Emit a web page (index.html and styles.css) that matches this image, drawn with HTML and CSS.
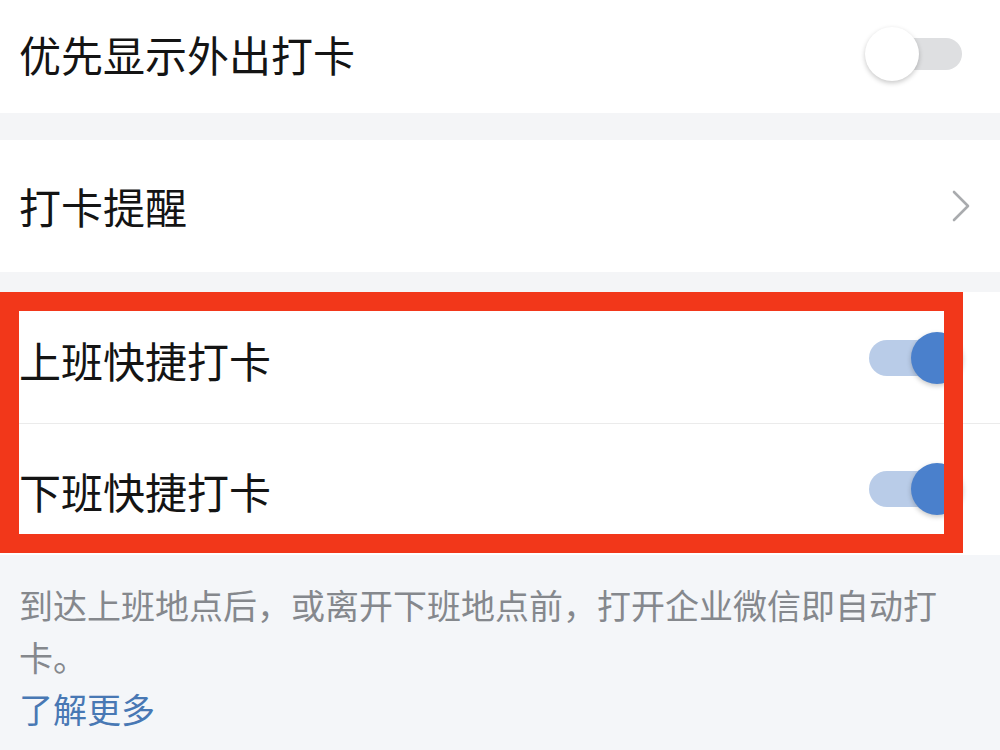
FILE: index.html
```html
<!DOCTYPE html>
<html>

<head>
	<meta charset="utf-8">
	<title>打卡设置</title>
	<link rel="stylesheet" href="styles.css">
</head>

<body>
	<div class="row first">
		<span class="label">优先显示外出打卡</span>
		<span class="toggle"></span>
	</div>

	<div class="row second">
		<span class="label">打卡提醒</span>
		<svg class="chevron" width="18" height="32" viewBox="0 0 18 32">
			<polyline points="2,2 16,16 2,30" fill="none" stroke="#a9abae" stroke-width="2.6" stroke-linecap="round" stroke-linejoin="round"/>
		</svg>
	</div>

	<div class="group">
		<div class="row quick divided">
			<span class="label">上班快捷打卡</span>
			<span class="toggle on"></span>
		</div>
		<div class="row quick">
			<span class="label">下班快捷打卡</span>
			<span class="toggle on"></span>
		</div>
		<div class="mark"></div>
	</div>

	<div class="note">
		<p>到达上班地点后，或离开下班地点前，打开企业微信即自动打卡。</p>
		<a href="#">了解更多</a>
	</div>
</body>

</html>
```

FILE: styles.css
```css
body {
	margin: 0;
	background: #f4f5f7;
	font-family: "Noto Sans CJK SC", "Noto Sans", sans-serif;
	color: #141414;
}

.row {
	display: flex;
	align-items: center;
	justify-content: space-between;
	background: #ffffff;
	padding: 0 37px 0 19px;
}

.label {
	font-size: 42px;
	line-height: 1;
}

.first {
	height: 113px;
	margin-bottom: 27px;
}

.first .label {
	margin-top: -5px;
}

.first .toggle {
	margin-top: -5px;
}

.second {
	height: 132px;
	margin-bottom: 20px;
	padding-right: 30px;
}

.quick {
	height: 130px;
}

.quick .label {
	margin-top: 4px;
}

.divided {
	height: 132px;
	box-shadow: inset 0 -1px 0 #ebebeb;
}

.group {
	position: relative;
	background: #ffffff;
	height: 263px;
}

.mark {
	position: absolute;
	top: 0;
	left: 0;
	right: 37px;
	bottom: 2px;
	border: 19px solid #f2371a;
}

.toggle {
	position: relative;
	width: 98px;
	height: 56px;
}

.toggle::before {
	content: "";
	position: absolute;
	left: 4px;
	right: 1px;
	top: 12px;
	height: 32px;
	border-radius: 16px;
	background: #dedfe1;
}

.toggle::after {
	content: "";
	position: absolute;
	left: 0;
	top: 1px;
	width: 54px;
	height: 54px;
	border-radius: 50%;
	background: #ffffff;
	box-shadow: 0 2px 5px rgba(0, 0, 0, 0.22);
}

.toggle.on::before {
	background: #b9cce8;
	top: 10px;
	height: 36px;
	border-radius: 18px;
}

.toggle.on::after {
	left: auto;
	right: 0;
	width: 52px;
	height: 52px;
	top: 2px;
	background: #4a80cc;
}

.note {
	background: #f4f6f9;
	padding: 24px 19px 30px;
	height: 141px;
}

.note p {
	margin: 0;
	width: 935px;
	font-size: 34px;
	line-height: 52px;
	color: #85888d;
}

.note a {
	display: block;
	font-size: 34px;
	line-height: 52px;
	color: #4878b4;
	text-decoration: none;
}
```
